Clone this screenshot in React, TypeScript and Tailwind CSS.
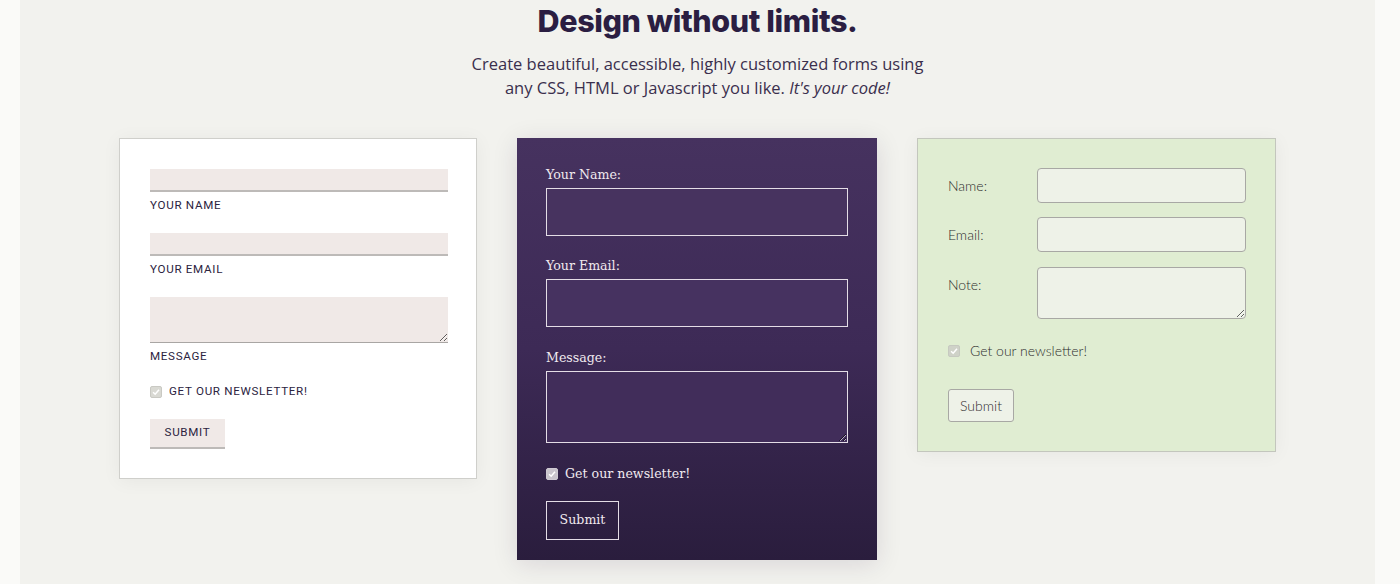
import React from 'react';

const Check: React.FC<{ tone: string }> = ({ tone }) => (
  <span className={`inline-flex h-[12px] w-[12px] shrink-0 items-center justify-center rounded-[2px] border ${tone}`}>
    <svg viewBox="0 0 12 12" className="h-[10px] w-[10px]" fill="none" stroke="#ffffff" strokeWidth="1.8">
      <path d="M2.5 6.2 5 8.6 9.6 3.2" />
    </svg>
  </span>
);

const App: React.FC = () => {
  return (
    <div className="min-h-[584px] bg-[#fafaf8] pl-[20px] pr-[25px]">
      <div className="min-h-[584px] bg-[#f2f2ee] pt-[2px]">
        <h1 className="text-center font-['Inter',sans-serif] text-[30.5px] font-extrabold leading-[38px] tracking-[-0.4px] text-[#2b1e42]">
          Design without limits.
        </h1>
        <p className="mx-auto mt-[12px] w-[460px] text-center font-['Open_Sans',sans-serif] text-[16.5px] leading-[24px] text-[#3a2f4d]">
          Create beautiful, accessible, highly customized forms using any CSS, HTML or Javascript you like.{' '}
          <em>It's your code!</em>
        </p>

        <div className="mt-[38px] flex items-start justify-center gap-[40px]">
          {/* plain form */}
          <div className="w-[358px] border border-[#cfcfcb] bg-white px-[30px] pb-[29px] pt-[30px] font-['Roboto',sans-serif] text-[11.6px] uppercase tracking-[0.7px] text-[#2b2340] shadow-[0_2px_18px_rgba(0,0,0,0.05)]">
            <input readOnly className="block h-[23px] w-[298px] border-b-2 border-[#bdbab8] bg-[#f0e9e7] outline-none" />
            <div className="mt-[5px] leading-[17px]">Your Name</div>
            <input readOnly className="mt-[19px] block h-[23px] w-[298px] border-b-2 border-[#bdbab8] bg-[#f0e9e7] outline-none" />
            <div className="mt-[5px] leading-[17px]">Your Email</div>
            <textarea readOnly className="mt-[19px] block h-[46px] w-[298px] border-b border-[#a9a6a4] bg-[#f0e9e7] outline-none" />
            <div className="mt-[5px] leading-[17px]">Message</div>
            <div className="mt-[18px] flex items-center gap-[7px] leading-[17px]">
              <Check tone="border-[#c9c9c3] bg-[#d9d9d3]" />
              <span>Get our newsletter!</span>
            </div>
            <button className="mt-[19px] block h-[30px] w-[75px] border-b-2 border-[#bdbab8] bg-[#f0e9e7] text-[11.6px] uppercase tracking-[0.7px] text-[#2b2340]">
              Submit
            </button>
          </div>

          {/* dark form */}
          <div className="w-[360px] bg-gradient-to-b from-[#46325f] via-[#3d2a56] to-[#2a1d3d] px-[29px] pb-[20px] pt-[27px] font-['DejaVu_Serif',serif] text-[12.6px] text-[#f0e9ee] shadow-[0_4px_24px_rgba(40,20,60,0.12)]">
            <div className="leading-[20px]">Your Name:</div>
            <input readOnly className="mt-[3px] block h-[48px] w-[302px] border border-[#e4dde6] bg-[#47335f] outline-none" />
            <div className="mt-[20px] leading-[20px]">Your Email:</div>
            <input readOnly className="mt-[3px] block h-[48px] w-[302px] border border-[#e4dde6] bg-[#463260] outline-none" />
            <div className="mt-[21px] leading-[20px]">Message:</div>
            <textarea readOnly className="mt-[3px] block h-[72px] w-[302px] border border-[#e4dde6] bg-[#412d5a] outline-none" />
            <div className="mt-[21px] flex items-center gap-[7px] leading-[20px]">
              <Check tone="border-[#cfcad3] bg-[#c9c4cc]" />
              <span>Get our newsletter!</span>
            </div>
            <button className="mt-[17px] block h-[39px] w-[73px] border border-[#e4dde6] bg-transparent font-['DejaVu_Serif',serif] text-[12.6px] text-[#f0e9ee]">
              Submit
            </button>
          </div>

          {/* green form */}
          <div className="w-[359px] border border-[#c3c6bd] bg-[#e0edd2] pb-[29px] pl-[30px] pr-[28px] pt-[29px] font-['Lato',sans-serif] text-[14px] font-light text-[#2e2e2e] shadow-[0_2px_18px_rgba(0,0,0,0.05)]">
            <div className="flex items-start">
              <label className="w-[89px] pt-[9px] leading-[18px]">Name:</label>
              <input readOnly className="block h-[35px] w-[209px] rounded-[4px] border border-[#a8a8a4] bg-[#eef2e8] outline-none" />
            </div>
            <div className="mt-[14px] flex items-start">
              <label className="w-[89px] pt-[9px] leading-[18px]">Email:</label>
              <input readOnly className="block h-[35px] w-[209px] rounded-[4px] border border-[#a8a8a4] bg-[#eef2e8] outline-none" />
            </div>
            <div className="mt-[15px] flex items-start">
              <label className="w-[89px] pt-[9px] leading-[18px]">Note:</label>
              <textarea readOnly className="block h-[52px] w-[209px] rounded-[4px] border border-[#a8a8a4] bg-[#eef2e8] outline-none" />
            </div>
            <div className="mt-[22px] flex items-center gap-[10px] leading-[20px]">
              <Check tone="border-[#c6c9c0] bg-[#cfd2c8]" />
              <span>Get our newsletter!</span>
            </div>
            <button className="mt-[28px] block h-[33px] w-[66px] rounded-[3px] border border-[#a8a8a4] bg-[#eef2e8] font-['Lato',sans-serif] text-[14px] font-light text-[#2e2e2e]">
              Submit
            </button>
          </div>
        </div>
      </div>
    </div>
  );
};

export default App;
